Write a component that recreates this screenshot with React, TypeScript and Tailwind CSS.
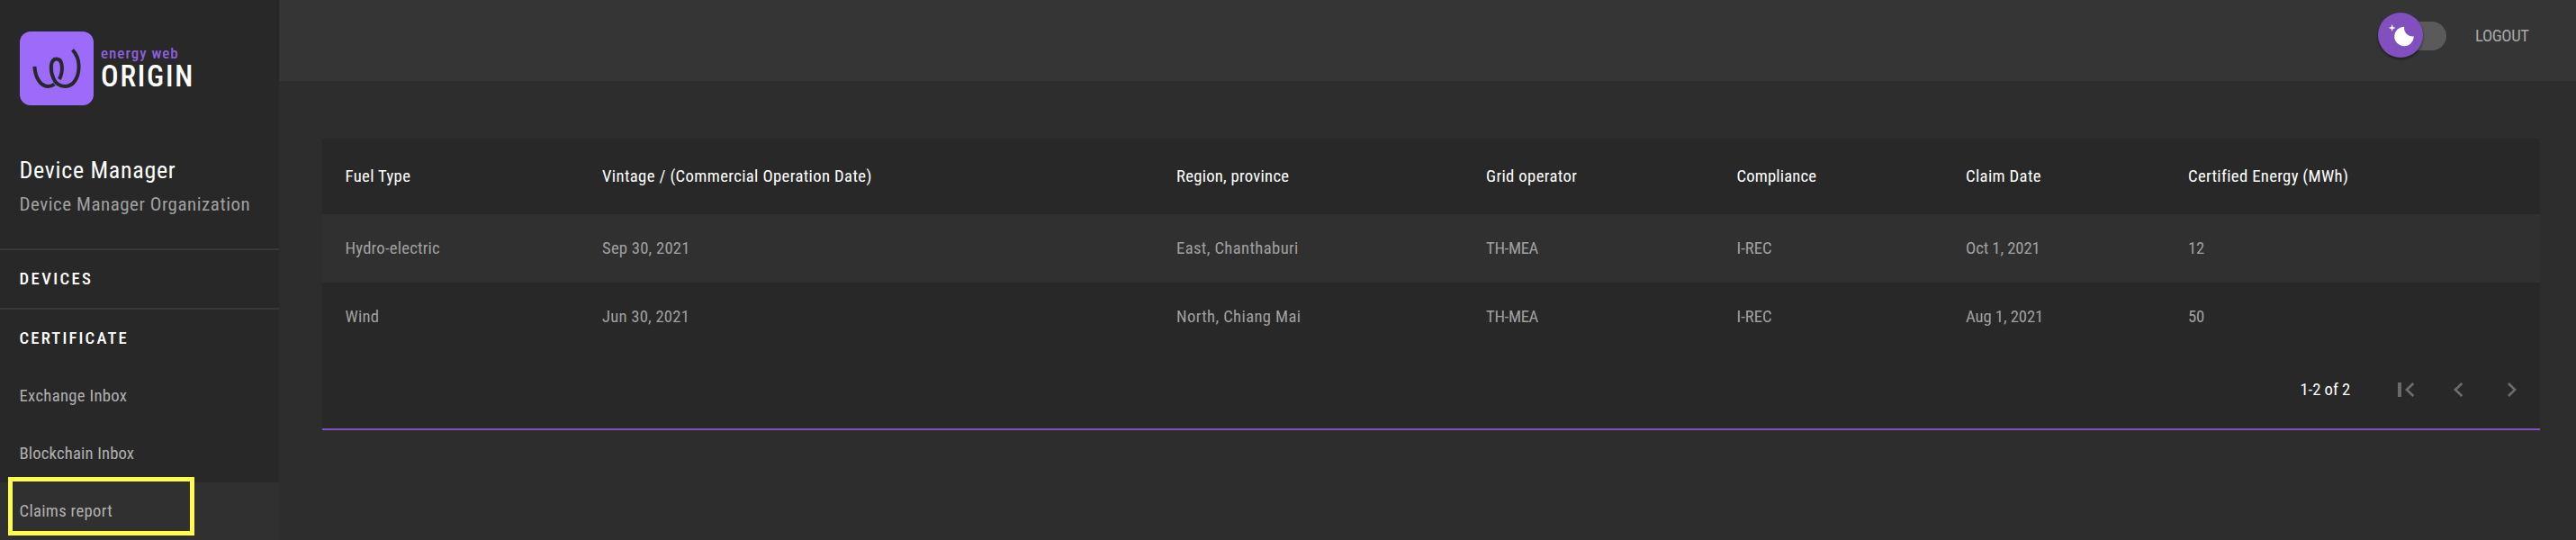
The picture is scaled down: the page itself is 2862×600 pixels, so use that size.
const columns = [
  { label: "Fuel Type", track: "tracking-[0.35px]" },
  { label: "Vintage / (Commercial Operation Date)", track: "tracking-[0.36px]" },
  { label: "Region, province", track: "tracking-[0.25px]" },
  { label: "Grid operator", track: "tracking-[0.35px]" },
  { label: "Compliance", track: "tracking-[0.15px]" },
  { label: "Claim Date", track: "tracking-[0.35px]" },
  { label: "Certified Energy (MWh)", track: "tracking-[0.33px]" },
];

const rows = [
  ["Hydro-electric", "Sep 30, 2021", "East, Chanthaburi", "TH-MEA", "I-REC", "Oct 1, 2021", "12"],
  ["Wind", "Jun 30, 2021", "North, Chiang Mai", "TH-MEA", "I-REC", "Aug 1, 2021", "50"],
];

const cellTracks = [
  "tracking-[0.2px]",
  "tracking-[0.2px]",
  "tracking-[0.36px]",
  "tracking-[-0.35px]",
  "tracking-[0px]",
  "tracking-[-0.1px]",
  "tracking-[-0.2px]",
];

const gridRow =
  "grid grid-cols-[285.5px_638px_344px_278.5px_254.5px_247px_1fr] items-center pl-[25.5px] text-[18.7px] leading-6 whitespace-nowrap";

function Logo() {
  return (
    <div className="mt-[35px] ml-[22px] flex h-[82px] gap-2">
      <svg className="size-[82px] shrink-0" viewBox="0 0 245 245" fill="none">
        <rect width="245" height="245" rx="36" fill="#9d6bf9" />
        <g stroke="#282828" strokeWidth="12">
          <path d="M49 116C51 150 67 182 94 182C102 182 109 180 115 175" />
          <path d="M131 158C143 137 146 91 122 91C99 91 101 132 112 156C120 175 135 182 151 182C180 182 196 150 196 116C196 94 188 75 175 61" />
        </g>
      </svg>
      <div className="flex flex-col pt-[14px] whitespace-nowrap">
        <span className="h-5 text-[17px] leading-[21px] font-medium tracking-[1px] text-[#8f5fdc]">energy web</span>
        <span className="text-[32.5px] leading-8 font-medium tracking-[1.8px] text-white">ORIGIN</span>
      </div>
    </div>
  );
}

function Sidebar() {
  return (
    <aside className="flex h-full w-[310px] shrink-0 flex-col bg-[#282828] whitespace-nowrap">
      <Logo />
      <div className="mt-[57px] pl-[21.5px] text-[26px] leading-[30px] tracking-[0.7px] text-white">Device Manager</div>
      <div className="mt-[8px] pl-[21.5px] text-[21px] leading-[30px] tracking-[0.52px] text-[#a0a0a0]">
        Device Manager Organization
      </div>
      <nav className="mt-[34px] flex flex-col text-[18.7px]">
        <div className="flex h-[66px] items-center border-t-2 border-[#383838] pl-[21.5px] font-medium tracking-[2.4px] text-white">
          DEVICES
        </div>
        <div className="flex h-[66px] items-center border-t-2 border-[#383838] pl-[21.5px] font-medium tracking-[2.15px] text-white">
          CERTIFICATE
        </div>
        <div className="flex h-16 items-center pl-[21.5px] tracking-[0.3px] text-[#b0b0b0]">Exchange Inbox</div>
        <div className="flex h-16 items-center pl-[21.5px] tracking-[0.15px] text-[#b0b0b0]">Blockchain Inbox</div>
        <div className="relative flex h-16 items-center bg-[#303030] pl-[21.5px] tracking-[0.3px] text-[#b0b0b0]">
          Claims report
          <span className="absolute -top-[6px] left-[9px] h-[65px] w-[207px] border-[5px] border-[#fffc4d]" />
        </div>
      </nav>
    </aside>
  );
}

function ThemeToggle() {
  return (
    <div className="relative flex h-8 w-[68px] rounded-full bg-[#5a5a5a]">
      <span className="absolute -top-[10px] -left-[8.5px] flex size-[50px] items-center justify-center rounded-full bg-[#8150be] shadow-[0_2px_3px_rgba(0,0,0,0.45)]">
        <svg className="size-8" viewBox="0 0 20 20" fill="#fff">
          <path d="M4.2 2.5l-.7 1.8-1.8.7 1.8.7.7 1.8.6-1.8L6.7 5l-1.9-.7-.6-1.8zm15 8.3a6.7 6.7 0 11-6.6-6.6 5.8 5.8 0 006.6 6.6z" />
        </svg>
      </span>
    </div>
  );
}

function Chevron({ className }: { className: string }) {
  return (
    <svg className={className} viewBox="0 0 7.41 12" fill="currentColor" preserveAspectRatio="none">
      <path d="M7.41 1.41L2.83 6l4.58 4.59L6 12 0 6l6-6z" />
    </svg>
  );
}

export default function App() {
  return (
    <div className="flex h-[600px] w-[2862px] overflow-hidden bg-[#2d2d2d] font-['Roboto_Condensed','Roboto',sans-serif]">
      <Sidebar />
      <main className="flex flex-1 flex-col">
        <header className="flex h-[90px] justify-end bg-[#353535] pt-6 pr-[52px]">
          <ThemeToggle />
          <span className="ml-8 w-[60px] text-[18.7px] leading-8 tracking-[-0.4px] text-[#a8a8a8]">LOGOUT</span>
        </header>
        <section className="mt-16 mr-10 ml-12 flex h-[324px] flex-col border-b-2 border-[#8150be] bg-[#282828]">
          <div className={`${gridRow} h-[84px] text-white`}>
            {columns.map((c) => (
              <span key={c.label} className={c.track}>
                {c.label}
              </span>
            ))}
          </div>
          {rows.map((row, i) => (
            <div key={row[0]} className={`${gridRow} h-[76px] text-[#a0a0a0] ${i === 0 ? "bg-[#303030]" : ""}`}>
              {row.map((cell, j) => (
                <span key={j} className={cellTracks[j]}>
                  {cell}
                </span>
              ))}
            </div>
          ))}
          <div className="flex flex-1 items-center justify-end pr-[26.5px] text-[#6b6b6b]">
            <span className="mr-[53px] w-[56px] text-[18.7px] leading-6 tracking-[-0.05px] whitespace-nowrap text-white">
              1-2 of 2
            </span>
            <span className="mr-1 h-4 w-[3.5px] bg-[#6b6b6b]" />
            <Chevron className="mr-[43.5px] h-4 w-[10.3px]" />
            <Chevron className="mr-[49.5px] h-4 w-[10.3px]" />
            <Chevron className="h-4 w-[10px] rotate-180" />
          </div>
        </section>
      </main>
    </div>
  );
}
